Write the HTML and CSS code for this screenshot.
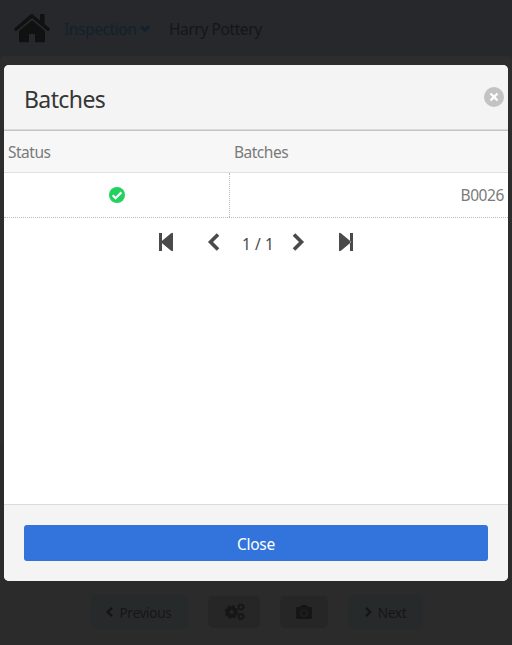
FILE: index.html
```html
<!DOCTYPE html>
<html lang="en">
<head>
<meta charset="utf-8">
<title>Batches</title>
<link rel="stylesheet" href="styles.css">
</head>
<body>
<div class="page">
  <nav class="navbar">
    <svg class="home" viewBox="0 0 36 29"><path d="M18 0 26 6.5V.8q0-.8.8-.8h3q.8 0 .8.8v9.3l5.2 4.3q.4.5 0 1l-1.2 1.4q-.5.5-1 .1L18 4 2.4 17.1q-.6.4-1-.1L.2 15.4q-.4-.5.1-1L16 .9Q18-.7 20 .9"/><path d="M18 6.2 31 17v10q0 1.300-1.300 1.300H21v-8.200h-6v8.200H6.300Q5 28.300 5 27V17Z"/></svg>
    <span class="menu">Inspection</span>
    <svg class="caret" viewBox="0 0 10 7"><path d="M1 1.200 5 5.200 9 1.200"/></svg>
    <span class="user">Harry Pottery</span>
  </nav>
  <main class="content"></main>
  <footer class="toolbar">
    <button class="tool nav prev"><svg class="chev" viewBox="0 0 7 10"><path d="M6 .8 1.700 5 6 9.200"/></svg><span>Previous</span></button>
    <button class="tool"><svg class="cogs" viewBox="0 0 21 18"><circle class="ring" cx="7.500" cy="9" r="3.800"/><circle class="teeth" cx="7.500" cy="9" r="5.800"/><circle class="ring small" cx="17" cy="4" r="2.300"/><circle class="teeth smallteeth" cx="17" cy="4" r="3.200"/><circle class="ring small" cx="17" cy="13.500" r="2.300"/><circle class="teeth smallteeth" cx="17" cy="13.500" r="3.200"/></svg></button>
    <button class="tool camera"><svg class="cam" viewBox="0 32 512 448"><path fill-rule="evenodd" d="M512 144v288c0 26.500-21.500 48-48 48H48c-26.500 0-48-21.500-48-48V144c0-26.500 21.500-48 48-48h88l12.300-32.900c7-18.700 24.900-31.100 44.900-31.100h125.500c20 0 37.900 12.400 44.900 31.100L376 96h88c26.500 0 48 21.500 48 48zM376 288a120 120 0 1 0-240 0 120 120 0 0 0 240 0zm-32 0a88 88 0 1 1-176 0 88 88 0 0 1 176 0z"/></svg></button>
    <button class="tool nav next"><svg class="chev" viewBox="0 0 7 10"><path d="M1 .8 5.300 5 1 9.200"/></svg><span>Next</span></button>
  </footer>
</div>
<section class="modal">
  <header class="head"><h1>Batches</h1><button class="delete" aria-label="Close dialog"><svg viewBox="0 0 20 20"><path d="m6.500 6.500 7 7m0-7-7 7"/></svg></button></header>
  <div class="body">
    <div class="row titles"><div class="cell">Status</div><div class="cell">Batches</div></div>
    <div class="row data">
      <div class="cell state"><svg viewBox="0 0 16 16"><circle cx="8" cy="8" r="8"/><path d="m3.700 8.300 2.900 2.900 5.800-5.800"/></svg></div>
      <div class="cell value">B0026</div>
    </div>
    <div class="pager">
      <svg class="step" viewBox="0 0 14 18"><path d="M0 0h3v18H0zM2.500 8.200 11.800.4Q14-1 14 1v16q0 2-2.200.6L2.500 9.800z"/></svg>
      <svg class="arrow left" viewBox="0 0 12 18"><path d="M10 1.500 2.500 9 10 16.500"/></svg>
      <span class="count">1 / 1</span>
      <svg class="arrow right" viewBox="0 0 12 18"><path d="M2 1.500 9.500 9 2 16.500"/></svg>
      <svg class="step last" viewBox="0 0 14 18"><path d="M11 0h3v18h-3zM11.500 8.200 2.200.4Q0-1 0 1v16q0 2 2.200.6L11.500 9.800z"/></svg>
    </div>
  </div>
  <footer class="foot"><button class="close">Close</button></footer>
</section>
</body>
</html>
```
FILE: styles.css
```css
* { box-sizing: border-box; }
body { margin: 0; font: 15.5px/24px "Noto Sans", "Open Sans", sans-serif; letter-spacing: -0.5px; color: #4a4a4a; height: 645px; overflow: hidden; }
h1 { margin: 0; font-weight: 400; }
button { font: inherit; letter-spacing: inherit; border: 0; margin: 0; padding: 0; }
svg { display: block; flex: none; overflow: visible; }
.page { height: 645px; background: #26282b; display: flex; flex-direction: column; }
.navbar { height: 56px; flex: none; display: flex; align-items: center; padding-left: 14px; color: #151617; }
.home { width: 36px; height: 29px; fill: #111; }
.menu { margin-left: 14px; width: 74px; color: #11222d; white-space: nowrap; letter-spacing: -0.4px; padding-top: 1px; }
.caret { width: 10px; height: 7px; margin-left: 2px; fill: none; stroke: #11222d; stroke-width: 2.9; }
.user { margin-left: 19px; white-space: nowrap; letter-spacing: -0.4px; padding-top: 1px; }
.content { height: 389px; background: #2d2d2d; border-radius: 5px 5px 0 0; }
.toolbar { flex: 1; background: #2b2b2b; display: flex; align-items: center; padding: 135px 0 1px 90px; }
.tool { width: 52px; height: 32px; border-radius: 5px; background: #262626; display: flex; align-items: center; justify-content: center; margin-left: 20px; color: #161616; font-size: 13.5px; letter-spacing: -0.25px; }
.tool.camera { width: 48px; }
.tool.nav { height: 34px; background: #272a2b; }
.tool.prev { width: 98px; margin-left: 0; }
.tool.next { width: 75px; }
.tool span { margin-left: 6px; padding-top: 1px; }
.chev { width: 7px; height: 10px; fill: none; stroke: #151515; stroke-width: 2.4; }
.cogs { width: 21px; height: 18px; fill: none; stroke: #161616; }
.ring { stroke-width: 3.5; }
.ring.small { stroke-width: 1.6; }
.teeth { stroke-width: 2; stroke-dasharray: 2.7 1.855; }
.smallteeth { stroke-width: 1; stroke-dasharray: 1.5 1.01; }
.cam { width: 16px; height: 14px; fill: #161616; }
.modal { position: absolute; left: 4px; top: 65px; width: 504px; height: 516px; display: flex; flex-direction: column; border-radius: 5px; overflow: hidden; background: #fff; }
.head { height: 65px; flex: none; background: #f4f4f4; border-bottom: 1px solid #dbdbdb; display: flex; align-items: center; justify-content: space-between; padding: 2px 4px 0 20px; }
h1 { font-size: 23px; letter-spacing: -0.6px; color: #363636; padding-top: 1px; }
.delete { width: 20px; height: 20px; border-radius: 50%; background: #c3c3c3; margin-bottom: 2px; }
.delete svg { width: 20px; height: 20px; stroke: #fff; stroke-width: 2.4; fill: none; }
.body { flex: 1; }
.row { display: grid; grid-template-columns: 226px 278px; color: #7a7a7a; }
.titles { height: 43px; background: #f7f7f7; border-top: 1px solid #c5c5c5; border-bottom: 1px solid #dfdfdf; align-items: center; }
.titles .cell { padding: 1px 0 0 4px; }
.data { height: 45px; border-bottom: 1px dotted #bbb; }
.data .cell { display: flex; align-items: center; }
.state { justify-content: center; border-right: 1px dotted #bbb; }
.state svg { width: 16px; height: 16px; fill: #23d160; }
.state path { fill: none; stroke: #fff; stroke-width: 2.2; }
.data .value { justify-content: flex-end; padding: 0 4px 0 0; letter-spacing: -0.4px; }
.pager { display: flex; align-items: center; padding: 15px 0 0 155px; }
.step { width: 14px; height: 18px; fill: #4a4a4a; }
.arrow { width: 12px; height: 18px; fill: none; stroke: #4a4a4a; stroke-width: 3.6; }
.left { margin-left: 35px; }
.count { width: 33px; height: 18px; line-height: 23px; margin-left: 22px; white-space: nowrap; letter-spacing: 0.1px; }
.right { margin-left: 17px; }
.last { margin-left: 35px; }
.foot { height: 77px; background: #f4f4f4; border-top: 1px solid #dbdbdb; padding: 20px; }
.close { width: 100%; height: 36px; border-radius: 3px; background: #3273dc; color: #fff; letter-spacing: -0.3px; padding-top: 1px; }
```
